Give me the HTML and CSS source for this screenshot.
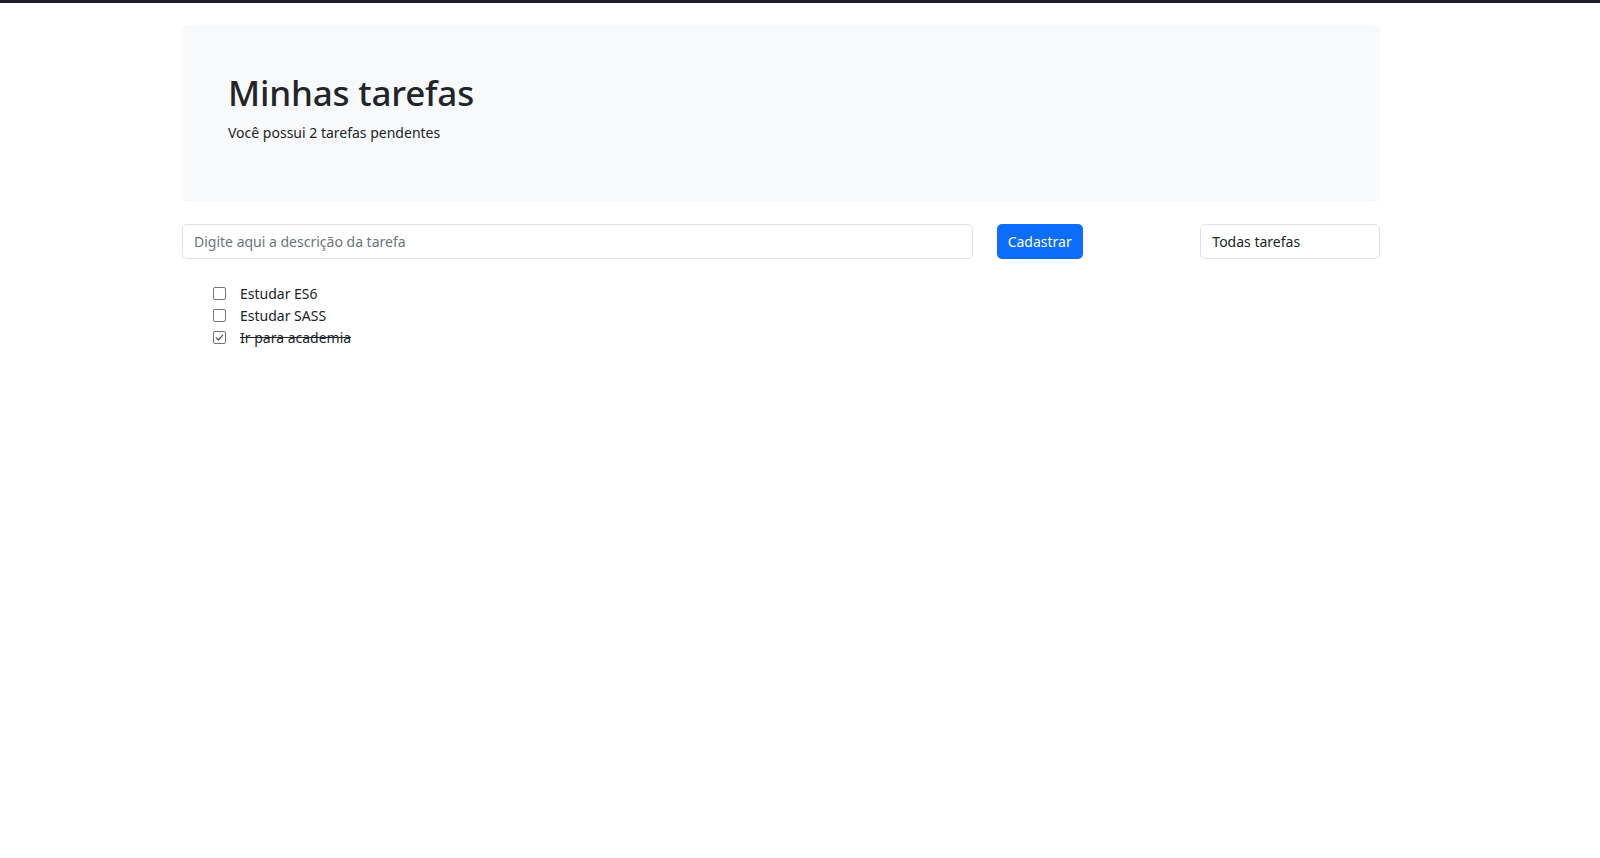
FILE: index.html
```html
<!DOCTYPE html>
<html lang="pt-BR">
<head>
<meta charset="utf-8">
<title>Minhas tarefas</title>
<link rel="stylesheet" href="styles.css">
</head>
<body>
<div class="topbar"></div>
<div class="page">
  <div class="container">
    <header class="jumbo">
      <h1 class="title">Minhas tarefas</h1>
      <p class="lead">Você possui 2 tarefas pendentes</p>
    </header>
    <form class="row">
      <input class="field" type="text" placeholder="Digite aqui a descrição da tarefa">
      <button class="btn" type="button">Cadastrar</button>
      <div class="select">Todas tarefas</div>
    </form>
    <ul class="tasks">
      <li class="task">
        <svg class="box" width="13" height="13" viewBox="0 0 13 13"><rect x="0.5" y="0.5" width="12" height="12" rx="1.5" fill="#fff" stroke="#767676"/></svg>
        <span>Estudar ES6</span>
      </li>
      <li class="task">
        <svg class="box" width="13" height="13" viewBox="0 0 13 13"><rect x="0.5" y="0.5" width="12" height="12" rx="1.5" fill="#fff" stroke="#767676"/></svg>
        <span>Estudar SASS</span>
      </li>
      <li class="task done">
        <svg class="box" width="13" height="13" viewBox="0 0 13 13"><rect x="0.5" y="0.5" width="12" height="12" rx="1.5" fill="#fff" stroke="#767676"/><path d="M3 6.6 L5.4 9 L10 3.8" fill="none" stroke="#555" stroke-width="1.2"/></svg>
        <span>Ir para academia</span>
      </li>
    </ul>
  </div>
</div>
</body>
</html>
```

FILE: styles.css
```css
* { box-sizing: border-box; }
html, body { margin: 0; padding: 0; background: #fff; }
body {
  font-family: "Noto Sans", "Open Sans", sans-serif;
  font-size: 14.4px;
  line-height: 1.5;
  color: #212529;
}
.topbar { height: 3px; background: #1d1e26; }
.page { padding: 22px 0 0 182px; }
.container { width: 1198px; }
.jumbo {
  height: 177px;
  background: #f8f9fa;
  border-radius: 6px;
  padding: 47px 46px 0;
}
.title {
  margin: 0 0 8px;
  font-size: 35px;
  font-weight: 500;
  line-height: 1.2;
  letter-spacing: -0.2px;
}
.lead { margin: 0; font-size: 14px; }
.row {
  display: grid;
  grid-template-columns: repeat(12, minmax(0, 1fr));
  column-gap: 24px;
  margin: 22px 0 0;
  align-items: center;
}
.field {
  grid-column: 1 / span 8;
  width: 100%;
  min-width: 0;
  height: 35px;
  border: 1px solid #dee2e6;
  border-radius: 5px;
  padding: 0 11px;
  font: inherit;
  font-size: 14px;
  color: #212529;
  background: #fff;
  outline: none;
}
.field::placeholder { color: #6c757d; }
.btn {
  grid-column: 9 / span 1;
  justify-self: start;
  white-space: nowrap;
  height: 35px;
  padding: 0 11px;
  border: 0;
  border-radius: 5px;
  background: #0d6efd;
  color: #fff;
  font: inherit;
  font-size: 14px;
}
.select {
  grid-column: 11 / span 2;
  height: 35px;
  border: 1px solid #dee2e6;
  border-radius: 5px;
  padding: 0 11px;
  display: flex;
  align-items: center;
  font-size: 14px;
}
.tasks {
  list-style: none;
  margin: 23px 0 0;
  padding: 0 0 0 31px;
}
.task {
  display: flex;
  align-items: center;
  gap: 14px;
  height: 22px;
  font-size: 14px;
}
.box { flex: none; }
.done span { text-decoration: line-through; }
```
